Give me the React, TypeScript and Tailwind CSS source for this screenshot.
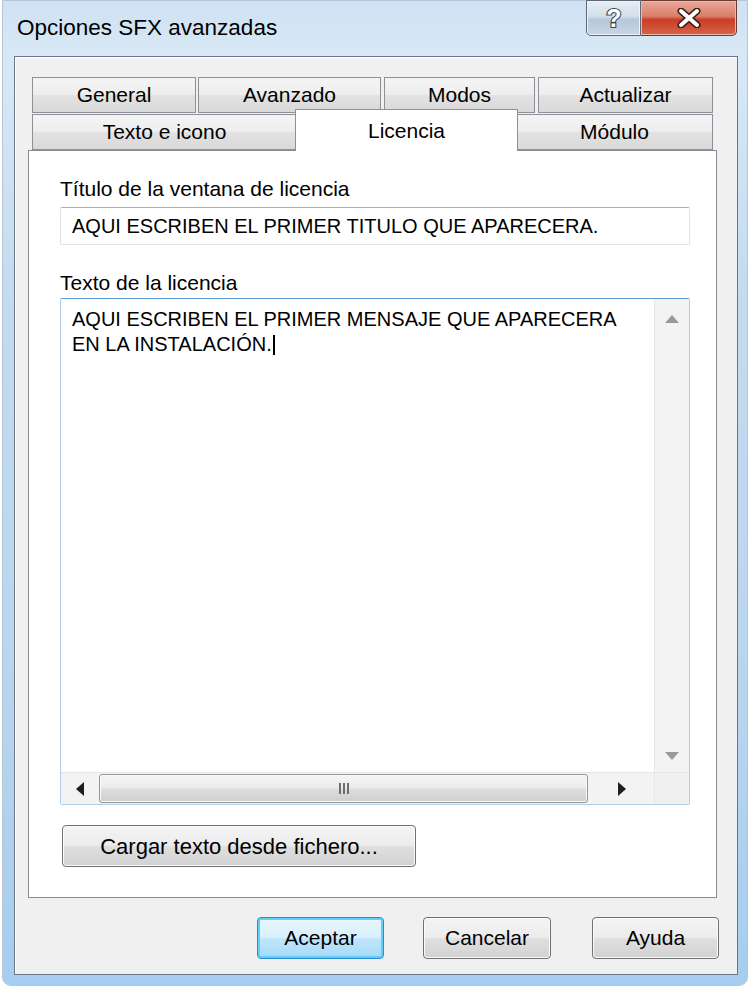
import React from "react";

const tabBg =
  "bg-[linear-gradient(to_bottom,#f4f4f4_0%,#eeeeee_48%,#e2e2e2_52%,#d9d9d9_100%)]";
const btnBg =
  "bg-[linear-gradient(to_bottom,#f4f4f4_0%,#ececec_48%,#dfdfdf_52%,#d2d2d2_100%)]";

function Tab({ label, w, ml = 0, h = 36 }: { label: string; w: number; ml?: number; h?: number }) {
  return (
    <div
      className={`flex items-center justify-center border border-[#8d9097] ${tabBg} text-[21px] text-black`}
      style={{ width: w, marginLeft: ml, height: h }}
    >
      {label}
    </div>
  );
}

function Button({
  label,
  w,
  primary = false,
  big = false,
}: {
  label: string;
  w: number;
  primary?: boolean;
  big?: boolean;
}) {
  const size = big ? "text-[22px]" : "text-[21px]";
  return (
    <div
      className={
        primary
          ? `flex h-[42px] items-center justify-center rounded-[4px] border border-[#2f8bd0] bg-[linear-gradient(to_bottom,#eaf6fd_0%,#d9f0fc_48%,#bee6fd_52%,#a7d9f5_100%)] ${size} text-black shadow-[inset_0_0_0_2px_#5fd0f5]`
          : `flex h-[42px] items-center justify-center rounded-[4px] border border-[#707070] ${btnBg} ${size} text-black shadow-[inset_0_0_0_1px_#fbfbfb]`
      }
      style={{ width: w }}
    >
      {label}
    </div>
  );
}

function Arrow({ dir, color }: { dir: "up" | "down" | "left" | "right"; color: string }) {
  const pts = {
    up: "0,8 7,0 14,8",
    down: "0,0 14,0 7,8",
    left: "8,0 8,14 0,7",
    right: "0,0 8,7 0,14",
  }[dir];
  const vert = dir === "up" || dir === "down";
  return (
    <svg width={vert ? 14 : 8} height={vert ? 8 : 14} viewBox={vert ? "0 0 14 8" : "0 0 8 14"}>
      <polygon points={pts} fill={color} />
    </svg>
  );
}

export default function App() {
  return (
    <div className="h-[987px] w-[750px] overflow-hidden bg-white font-['Liberation_Sans',Arial,sans-serif]">
      {/* ventana */}
      <div className="ml-[2px] flex h-[986px] w-[746px] flex-col rounded-b-[9px] border border-[#b4c6d8] bg-[linear-gradient(to_bottom,#cfe2f3_0%,#d8e8f6_6%,#c3dbf0_30%,#b9d5ee_70%,#a6cdef_100%)]">
        {/* barra de titulo */}
        <div className="flex h-[55px] justify-between">
          <div className="pl-[14px] pt-[10px] text-[22.5px] text-black">Opciones SFX avanzadas</div>
          <div className="mr-[10px] flex h-[36px] -mt-px">
            <div className="flex w-[55px] items-center justify-center rounded-bl-[5px] border border-[#5c6878] bg-[linear-gradient(to_bottom,#e6edf4_0%,#d3dfea_45%,#b6c7d8_55%,#c6d6e5_100%)] shadow-[inset_0_0_0_1px_#eef4fa]">
              <svg width="24" height="28" viewBox="0 0 24 28">
                <text
                  x="12"
                  y="23"
                  textAnchor="middle"
                  fontFamily="Liberation Sans, Arial, sans-serif"
                  fontWeight="bold"
                  fontSize="25"
                  fill="#ffffff"
                  stroke="#3a4756"
                  strokeWidth="2.2"
                  paintOrder="stroke"
                >
                  ?
                </text>
              </svg>
            </div>
            <div className="flex w-[96px] items-center justify-center rounded-br-[5px] border border-l-0 border-[#6b3a33] bg-[linear-gradient(to_bottom,#e9a99b_0%,#dc7d69_45%,#c83d26_55%,#d8644a_100%)] shadow-[inset_0_0_0_1px_#f0b7aa]">
              <svg width="26" height="20" viewBox="0 0 26 20">
                <path d="M5 3 L21 17 M21 3 L5 17" stroke="#3b1f1a" strokeWidth="7" strokeLinecap="round" />
                <path d="M5 3 L21 17 M21 3 L5 17" stroke="#ffffff" strokeWidth="4" strokeLinecap="round" />
              </svg>
            </div>
          </div>
        </div>

        {/* area cliente */}
        <div className="ml-[11px] mr-[9px] flex h-[919px] flex-col border border-[#6a7685] bg-[#f0f0f0] shadow-[inset_1px_1px_0_#ffffff]">
          <div className="pl-[13px] pt-[20px]">
            <div className="w-[689px]">
              <div className="flex h-[36px] pl-[4px]">
                <Tab label="General" w={164} />
                <Tab label="Avanzado" w={183} ml={2} />
                <Tab label="Modos" w={151} ml={3} />
                <Tab label="Actualizar" w={175} ml={3} />
              </div>
              <div className="-mt-[4px] flex h-[41px] items-end pl-[4px]">
                <Tab label="Texto e icono" w={265} h={36} />
                <div className="relative z-10 -ml-[2px] -mb-px flex h-[42px] w-[223px] items-start justify-center border border-b-0 border-[#8d9097] bg-white pt-[5px] text-[21px] text-black">
                  Licencia
                </div>
                <Tab label="Módulo" w={197} ml={-2} h={36} />
              </div>

              {/* panel */}
              <div className="h-[748px] border border-[#898c95] bg-white pl-[31px] pt-[26px]">
                <div className="h-[24px] text-[21px] leading-[24px] text-black">Título de la ventana de licencia</div>
                <div className="mt-[6px] flex h-[38px] w-[630px] items-center rounded-[2px] border border-[#dde3ea] border-t-[#abadb3] pl-[11px] text-[20px] text-black">
                  AQUI ESCRIBEN EL PRIMER TITULO QUE APARECERA.
                </div>
                <div className="mt-[26px] h-[24px] text-[21px] leading-[24px] text-black">Texto de la licencia</div>
                <div className="mt-[3px] flex h-[507px] w-[630px] flex-col rounded-[2px] border border-[#b2cfea] border-t-[#5a9bd6]">
                  <div className="flex flex-1">
                    <div className="flex-1 pl-[11px] pt-[8px] text-[20px] leading-[25px] text-black">
                      <div>AQUI ESCRIBEN EL PRIMER MENSAJE QUE APARECERA</div>
                      <div className="flex items-center">
                        EN LA INSTALACIÓN.
                        <span className="ml-[1px] inline-block h-[20px] w-[2px] bg-black" />
                      </div>
                    </div>
                    <div className="flex w-[35px] flex-col items-center justify-between border-l border-[#e6e6e6] bg-[#f3f3f3] pb-[12px] pt-[16px]">
                      <Arrow dir="up" color="#9a9a9a" />
                      <Arrow dir="down" color="#9a9a9a" />
                    </div>
                  </div>
                  <div className="flex h-[32px]">
                    <div className="flex flex-1 items-center border-t border-[#e6e6e6] bg-[#f3f3f3]">
                      <div className="flex w-[38px] justify-center">
                        <Arrow dir="left" color="#1e1e1e" />
                      </div>
                      <div className="flex h-[29px] w-[489px] items-center justify-center rounded-[3px] border border-[#959595] bg-[linear-gradient(to_bottom,#f5f5f5_0%,#ececec_45%,#dcdcdc_55%,#cfcfcf_100%)] shadow-[inset_0_0_0_1px_#fafafa]">
                        <div className="flex gap-[2px]">
                          <span className="h-[11px] w-[2px] bg-[#6e6e6e]" />
                          <span className="h-[11px] w-[2px] bg-[#6e6e6e]" />
                          <span className="h-[11px] w-[2px] bg-[#6e6e6e]" />
                        </div>
                      </div>
                      <div className="flex flex-1 justify-center pl-[2px]">
                        <Arrow dir="right" color="#1e1e1e" />
                      </div>
                    </div>
                    <div className="w-[35px] border-l border-t border-[#e6e6e6] bg-[#f0f0f0]" />
                  </div>
                </div>
                <div className="mt-[20px] pl-[2px]">
                  <Button label="Cargar texto desde fichero..." w={354} big />
                </div>
              </div>
            </div>
          </div>

          {/* botones */}
          <div className="flex pl-[242px] pt-[19px]">
            <Button label="Aceptar" w={127} primary />
            <div className="ml-[39px]">
              <Button label="Cancelar" w={128} />
            </div>
            <div className="ml-[41px]">
              <Button label="Ayuda" w={127} />
            </div>
          </div>
        </div>
      </div>
    </div>
  );
}
